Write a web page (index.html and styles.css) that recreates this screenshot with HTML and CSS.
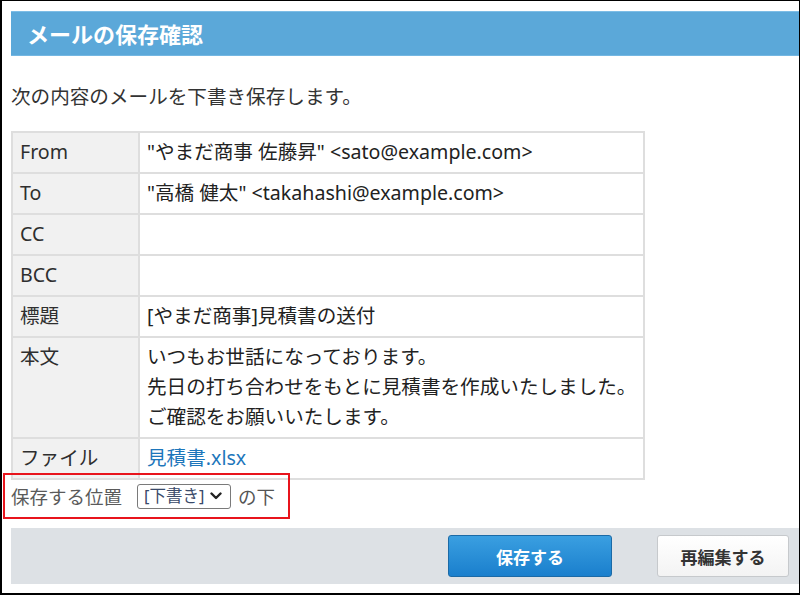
FILE: index.html
```html
<!DOCTYPE html>
<html lang="ja">
<head>
<meta charset="utf-8">
<title>メールの保存確認</title>
<link rel="stylesheet" href="styles.css">
</head>
<body>
<div class="frame">
  <div class="header"><h1 class="title">メールの保存確認</h1></div>
  <p class="intro">次の内容のメールを下書き保存します。</p>
  <table class="mail">
    <tr><th>From</th><td>"やまだ商事 佐藤昇" &lt;sato@example.com&gt;</td></tr>
    <tr><th>To</th><td>"高橋 健太" &lt;takahashi@example.com&gt;</td></tr>
    <tr><th>CC</th><td></td></tr>
    <tr><th>BCC</th><td></td></tr>
    <tr><th>標題</th><td>[やまだ商事]見積書の送付</td></tr>
    <tr><th>本文</th><td>いつもお世話になっております。<br>先日の打ち合わせをもとに見積書を作成いたしました。<br>ご確認をお願いいたします。</td></tr>
    <tr><th>ファイル</th><td><a class="file" href="#">見積書.xlsx</a></td></tr>
  </table>
  <div class="location">
    <span class="loc-label">保存する位置</span>
    <span class="select"><span class="select-text">[下書き]</span><svg class="chev" width="12" height="8" viewBox="0 0 12 8"><path d="M1.5 1.5 L6 6 L10.5 1.5" fill="none" stroke="#222" stroke-width="2.4" stroke-linecap="round" stroke-linejoin="round"/></svg></span>
    <span class="loc-after">の下</span>
  </div>
  <div class="footer">
    <button class="btn btn-primary">保存する</button>
    <button class="btn btn-secondary">再編集する</button>
  </div>
  <div class="highlight"></div>
</div>
</body>
</html>
```
FILE: styles.css
```css
html, body {
  margin: 0;
  padding: 0;
  background: #fff;
}
body {
  font-family: "Noto Sans", "Noto Sans CJK JP", sans-serif;
  color: #333;
}
.frame {
  position: relative;
  box-sizing: border-box;
  width: 800px;
  height: 595px;
  border-left: 2px solid #000;
  border-top: 1px solid #000;
  border-right: 1px solid #000;
  border-bottom: 2px solid #000;
  padding: 10px 0 0 9px;
  overflow: hidden;
}
.header {
  box-sizing: border-box;
  height: 45px;
  background: #5ba8d9;
  border-top: 1px solid #7dbde6;
  border-bottom: 1px solid #74b7e2;
  display: flex;
  align-items: center;
  padding-left: 16px;
}
.title {
  margin: 0;
  font-size: 22px;
  font-weight: bold;
  color: #fff;
  line-height: 1;
}
.intro {
  margin: 27px 0 20px 0;
  font-size: 19.6px;
  line-height: 28px;
  color: #333;
  white-space: nowrap;
}
.mail {
  border-collapse: collapse;
  table-layout: fixed;
  width: 634px;
  font-size: 19.6px;
  line-height: 30px;
}
.mail th, .mail td {
  border: 2px solid #dedede;
  padding: 4px 6px 5px 7px;
  text-align: left;
  vertical-align: top;
  font-weight: normal;
  white-space: nowrap;
}
.mail th {
  width: 112px;
  background: #f1f1f1;
  color: #2e2e2e;
}
.mail td {
  color: #222;
  background: #fff;
}
.file {
  color: #1d76bb;
  text-decoration: none;
}
.location {
  display: flex;
  align-items: center;
  height: 32px;
  margin-bottom: 16px;
  font-size: 18.5px;
  white-space: nowrap;
}
.loc-label {
  color: #5a5a5a;
  margin-right: 15px;
}
.select {
  box-sizing: border-box;
  width: 94px;
  height: 25px;
  border: 1px solid #7a7a7a;
  border-radius: 3px;
  display: flex;
  align-items: center;
  justify-content: space-between;
  padding: 0 8px 0 6px;
  background: #fff;
}
.select-text {
  font-size: 16.5px;
  color: #3a4a6a;
  line-height: 1;
}
.chev {
  display: block;
}
.loc-after {
  margin-left: 7px;
  color: #555;
}
.footer {
  height: 56px;
  background: #dde1e5;
  display: flex;
  justify-content: flex-end;
  align-items: center;
  gap: 45px;
  padding-right: 10px;
}
.btn {
  box-sizing: border-box;
  height: 42px;
  border-radius: 3px;
  font-family: "Noto Sans CJK JP", sans-serif;
  font-size: 17px;
  font-weight: bold;
  cursor: pointer;
}
.btn-primary {
  width: 164px;
  color: #fff;
  background: linear-gradient(#3a9fe1, #1a7fcd);
  border: 1px solid #1b6aa6;
}
.btn-secondary {
  width: 132px;
  color: #333;
  background: linear-gradient(#ffffff, #f3f3f3);
  border: 1px solid #c6c9cc;
}
.highlight {
  position: absolute;
  left: 1px;
  top: 472px;
  width: 283px;
  height: 42px;
  border: 2px solid #e8141c;
  pointer-events: none;
}
```
